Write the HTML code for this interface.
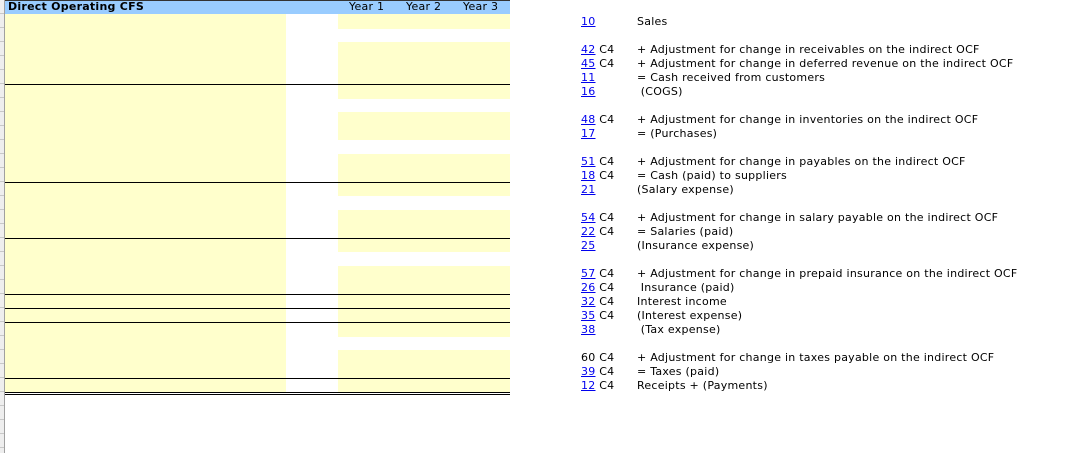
<!DOCTYPE html>
<html><head><meta charset="utf-8"><style>
body{margin:0;width:1086px;height:453px;background:#fff;position:relative;overflow:hidden;font-family:"DejaVu Sans","Liberation Sans",sans-serif;font-size:11px;letter-spacing:0.25px;color:#000}
div{position:absolute}
.y{background:#ffffcc}
.ln{background:#000;height:1px;left:5px;width:505px}
.t{white-space:nowrap;line-height:14px;margin-top:1px}
a{color:#0000ee;text-decoration:underline}
</style></head><body>
<div style="left:0;top:0;width:4px;height:453px;background:#eeeeee"></div>
<div style="left:4px;top:0;width:1px;height:453px;background:#a0a0a0"></div>
<div style="left:0;top:0;width:4px;height:453px;background:repeating-linear-gradient(to bottom,transparent 0,transparent 13px,#c8c8c8 13px,#c8c8c8 14px)"></div>
<div style="left:5px;top:0;width:505px;height:14px;background:#99ccff;border-top:1px solid #333;box-sizing:border-box"></div>
<div class="t" style="left:8px;top:-1px;font-weight:bold">Direct Operating CFS</div>
<div class="t" style="left:349px;top:-1px">Year 1</div>
<div class="t" style="left:406px;top:-1px">Year 2</div>
<div class="t" style="left:463px;top:-1px">Year 3</div>
<div class="y" style="left:5px;top:14px;width:281px;height:378px"></div>
<div class="y" style="left:338px;top:14px;width:172px;height:15px"></div>
<div class="y" style="left:338px;top:42px;width:172px;height:57px"></div>
<div class="y" style="left:338px;top:112px;width:172px;height:28px"></div>
<div class="y" style="left:338px;top:154px;width:172px;height:42px"></div>
<div class="y" style="left:338px;top:210px;width:172px;height:42px"></div>
<div class="y" style="left:338px;top:266px;width:172px;height:71px"></div>
<div class="y" style="left:338px;top:350px;width:172px;height:42px"></div>
<div class="ln" style="top:84px"></div>
<div class="ln" style="top:182px"></div>
<div class="ln" style="top:238px"></div>
<div class="ln" style="top:294px"></div>
<div class="ln" style="top:308px"></div>
<div class="ln" style="top:322px"></div>
<div class="ln" style="top:378px"></div>
<div class="ln" style="top:392px"></div>
<div class="ln" style="top:394px"></div>

<div class="t" style="left:581px;top:14px"><a>10</a></div><div class="t" style="left:637px;top:14px">Sales</div>
<div class="t" style="left:581px;top:42px"><a>42</a> C4</div><div class="t" style="left:637px;top:42px">+ Adjustment for change in receivables on the indirect OCF</div>
<div class="t" style="left:581px;top:56px"><a>45</a> C4</div><div class="t" style="left:637px;top:56px">+ Adjustment for change in deferred revenue on the indirect OCF</div>
<div class="t" style="left:581px;top:70px"><a>11</a></div><div class="t" style="left:637px;top:70px">= Cash received from customers</div>
<div class="t" style="left:581px;top:84px"><a>16</a></div><div class="t" style="left:637px;top:84px">&nbsp;(COGS)</div>
<div class="t" style="left:581px;top:112px"><a>48</a> C4</div><div class="t" style="left:637px;top:112px">+ Adjustment for change in inventories on the indirect OCF</div>
<div class="t" style="left:581px;top:126px"><a>17</a></div><div class="t" style="left:637px;top:126px">= (Purchases)</div>
<div class="t" style="left:581px;top:154px"><a>51</a> C4</div><div class="t" style="left:637px;top:154px">+ Adjustment for change in payables on the indirect OCF</div>
<div class="t" style="left:581px;top:168px"><a>18</a> C4</div><div class="t" style="left:637px;top:168px">= Cash (paid) to suppliers</div>
<div class="t" style="left:581px;top:182px"><a>21</a></div><div class="t" style="left:637px;top:182px">(Salary expense)</div>
<div class="t" style="left:581px;top:210px"><a>54</a> C4</div><div class="t" style="left:637px;top:210px">+ Adjustment for change in salary payable on the indirect OCF</div>
<div class="t" style="left:581px;top:224px"><a>22</a> C4</div><div class="t" style="left:637px;top:224px">= Salaries (paid)</div>
<div class="t" style="left:581px;top:238px"><a>25</a></div><div class="t" style="left:637px;top:238px">(Insurance expense)</div>
<div class="t" style="left:581px;top:266px"><a>57</a> C4</div><div class="t" style="left:637px;top:266px">+ Adjustment for change in prepaid insurance on the indirect OCF</div>
<div class="t" style="left:581px;top:280px"><a>26</a> C4</div><div class="t" style="left:637px;top:280px">&nbsp;Insurance (paid)</div>
<div class="t" style="left:581px;top:294px"><a>32</a> C4</div><div class="t" style="left:637px;top:294px">Interest income</div>
<div class="t" style="left:581px;top:308px"><a>35</a> C4</div><div class="t" style="left:637px;top:308px">(Interest expense)</div>
<div class="t" style="left:581px;top:322px"><a>38</a></div><div class="t" style="left:637px;top:322px">&nbsp;(Tax expense)</div>
<div class="t" style="left:581px;top:350px">60 C4</div><div class="t" style="left:637px;top:350px">+ Adjustment for change in taxes payable on the indirect OCF</div>
<div class="t" style="left:581px;top:364px"><a>39</a> C4</div><div class="t" style="left:637px;top:364px">= Taxes (paid)</div>
<div class="t" style="left:581px;top:378px"><a>12</a> C4</div><div class="t" style="left:637px;top:378px">Receipts + (Payments)</div>
</body></html>
